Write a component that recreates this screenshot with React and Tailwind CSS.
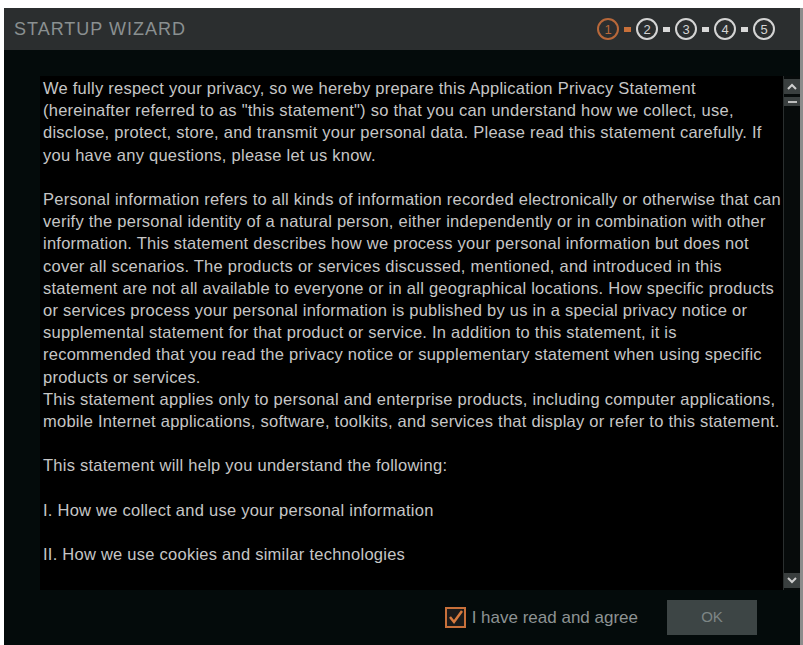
import { useState } from 'react';

const paragraphs = [
  [
    'We fully respect your privacy, so we hereby prepare this Application Privacy Statement',
    '(hereinafter referred to as "this statement") so that you can understand how we collect, use,',
    'disclose, protect, store, and transmit your personal data. Please read this statement carefully. If',
    'you have any questions, please let us know.',
  ],
  [
    'Personal information refers to all kinds of information recorded electronically or otherwise that can',
    'verify the personal identity of a natural person, either independently or in combination with other',
    'information. This statement describes how we process your personal information but does not',
    'cover all scenarios. The products or services discussed, mentioned, and introduced in this',
    'statement are not all available to everyone or in all geographical locations. How specific products',
    'or services process your personal information is published by us in a special privacy notice or',
    'supplemental statement for that product or service. In addition to this statement, it is',
    'recommended that you read the privacy notice or supplementary statement when using specific',
    'products or services.',
    'This statement applies only to personal and enterprise products, including computer applications,',
    'mobile Internet applications, software, toolkits, and services that display or refer to this statement.',
  ],
  ['This statement will help you understand the following:'],
  ['I. How we collect and use your personal information'],
  ['II. How we use cookies and similar technologies'],
];

function Steps() {
  const steps = [1, 2, 3, 4, 5];
  return (
    <div className="flex items-center">
      {steps.map((n, i) => (
        <div key={n} className="flex items-center">
          {i > 0 && (
            <div className={`mx-[5px] h-[5px] w-[7px] ${i === 1 ? 'bg-[#c8703a]' : 'bg-[#d8d8d8]'}`} />
          )}
          <div
            className={`flex h-[22px] w-[22px] items-center justify-center rounded-full border-2 text-[13px] leading-none ${
              n === 1 ? 'border-[#b8683a] text-[#b8683a]' : 'border-[#d4d4d4] text-[#d4d4d4]'
            }`}
          >
            {n}
          </div>
        </div>
      ))}
    </div>
  );
}

function ScrollBar() {
  return (
    <div className="flex w-[17px] flex-col border-l border-[#2a2f2f] bg-[#070b0b] pt-[3px]">
      <div className="flex h-[15px] items-center justify-center bg-[#3a3f3f]">
        <svg width="10" height="7" viewBox="0 0 10 7">
          <path d="M1 6 L5 2 L9 6" fill="none" stroke="#cfcfcf" strokeWidth="2" />
        </svg>
      </div>
      <div className="mt-[3px] flex h-[9px] items-center justify-center bg-[#3a3f3f]">
        <div className="h-[2px] w-[9px] bg-[#bdbdbd]" />
      </div>
      <div className="flex-1" />
      <div className="mb-[2px] flex h-[15px] items-center justify-center bg-[#3a3f3f]">
        <svg width="10" height="7" viewBox="0 0 10 7">
          <path d="M1 1 L5 5 L9 1" fill="none" stroke="#cfcfcf" strokeWidth="2" />
        </svg>
      </div>
    </div>
  );
}

export default function App() {
  const [agreed, setAgreed] = useState(true);
  return (
    <div className="h-[645px] w-[803px] bg-white pl-[4px] pt-[8px]" style={{ fontFamily: '"Liberation Sans", Arial, sans-serif' }}>
      <div className="flex h-full flex-col border-r-[3px] border-[#8c8c8c]">
        <div className="flex h-[42px] items-center justify-between bg-[#2b2e2f] pl-[10px] pr-[25px]">
          <span className="text-[18px] tracking-[1px] text-[#8a9091]">STARTUP WIZARD</span>
          <Steps />
        </div>
        <div className="flex flex-1 flex-col bg-[#040b0b] pl-[36px] pt-[26px]">
          <div className="flex h-[514px] bg-black">
            <div className="flex-1 overflow-hidden pl-[3px] pt-[1px] text-[16.5px] leading-[22.2px] tracking-[0.25px] text-[#c6c6c6]">
              {paragraphs.map((p, i) => (
                <div key={i} className="mb-[22.2px]">
                  {p.map((line) => (
                    <div key={line} className="whitespace-nowrap">{line}</div>
                  ))}
                </div>
              ))}
            </div>
            <ScrollBar />
          </div>
          <div className="flex flex-1 items-center justify-end pr-[43px]">
            <button onClick={() => setAgreed(!agreed)} className="flex items-center">
              <svg width="21" height="21" viewBox="0 0 21 21">
                <rect x="1" y="1" width="19" height="19" fill="#1a1a1a" stroke="#c8703a" strokeWidth="2" />
                {agreed && <path d="M5 10 L9 15 L17 4" fill="none" stroke="#d77a3e" strokeWidth="2.5" />}
              </svg>
              <span className="ml-[6px] text-[17px] text-[#8d9393]">I have read and agree</span>
            </button>
            <button className="ml-[29px] h-[35px] w-[90px] bg-[#3d4545] text-[15px] text-[#7d8585]">OK</button>
          </div>
        </div>
      </div>
    </div>
  );
}
